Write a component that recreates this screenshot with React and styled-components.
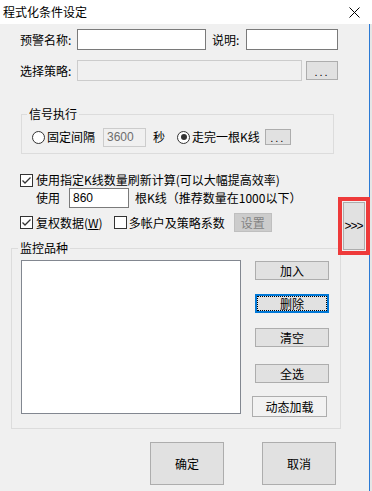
import React from "react"
import styled, { createGlobalStyle } from "styled-components"

const GlobalStyle = createGlobalStyle`
  html, body {
    margin: 0;
    padding: 0;
    background: #f0f0f0;
  }
  body {
    font-family: "Noto Sans CJK SC", "Microsoft YaHei", sans-serif;
    font-size: 12px;
    color: #000;
  }
`

const Window = styled.div`
  position: relative;
  width: 372px;
  height: 491px;
  display: flex;
  flex-direction: column;
  overflow: hidden;
  background: #f0f0f0;
`

const TitleBar = styled.div`
  flex: none;
  height: 24px;
  background: #fff;
  display: flex;
  align-items: center;
  justify-content: space-between;
  padding: 0 12px 0 3px;
  line-height: 16px;
`

const Main = styled.div`
  flex: 1;
  display: flex;
`

const Dialog = styled.div`
  width: 369px;
  display: flex;
  flex-direction: column;
  align-items: flex-start;
`

const Edge = styled.div`
  width: 2px;
  border-left: 1px solid #2a7ad5;
  background: #e6e6e6;
`

const Row = styled.div`
  display: flex;
  align-items: center;
  height: ${p => p.$h || 21}px;
  margin-top: ${p => p.$mt || 0}px;
  margin-bottom: ${p => p.$mb || 0}px;
  padding-left: ${p => p.$pl || 0}px;
  line-height: 16px;
  white-space: nowrap;
`

const Label = styled.span`
  width: ${p => (p.$w ? p.$w + "px" : "auto")};
  margin-left: ${p => p.$ml || 0}px;
  flex: none;
`

const TextBox = styled.div`
  box-sizing: border-box;
  width: ${p => p.$w}px;
  height: ${p => p.$h || 21}px;
  margin-left: ${p => p.$ml || 0}px;
  border: 1px solid ${p => (p.$disabled ? "#cccccc" : "#7a7a7a")};
  background: ${p => (p.$disabled ? "#f0f0f0" : "#fff")};
  color: ${p => (p.$disabled ? "#6d6d6d" : "#000")};
  padding: 0 3px;
  display: flex;
  align-items: center;
  font-family: "Liberation Sans", "Noto Sans CJK SC", sans-serif;
  font-size: 12px;
`

const Button = styled.button`
  box-sizing: border-box;
  flex: none;
  width: ${p => p.$w}px;
  height: ${p => p.$h || 19}px;
  margin: ${p => p.$mt || 0}px 0 0 ${p => p.$ml || 0}px;
  padding: 0;
  border: 1px solid #adadad;
  background: #e1e1e1;
  color: #000;
  font-family: "Noto Sans CJK SC", "Microsoft YaHei", sans-serif;
  font-size: 12px;
  line-height: 14px;
  display: flex;
  align-items: center;
  justify-content: center;

  &[disabled] {
    background: #cccccc;
    border-color: #bfbfbf;
    color: #838383;
  }
`

const FocusButton = styled(Button)`
  border: 2px solid #0078d7;
  outline: 1px dotted #000;
  outline-offset: -3px;
`

const PlainButton = styled(Button)`
  background: #f2f2f2;
`

const Dots = styled.span`
  letter-spacing: 2px;
  font-family: "Liberation Sans", sans-serif;
  font-size: 11px;
  margin-top: 2px;
`

const Group = styled.fieldset`
  box-sizing: border-box;
  width: ${p => p.$w}px;
  margin: ${p => p.$mt}px 0 0 ${p => p.$ml}px;
  padding: 0;
  border: 1px solid #dcdcdc;
  min-width: 0;
`

const Legend = styled.legend`
  margin-left: ${p => p.$ml || 5}px;
  padding: 0 2px;
  line-height: 16px;
  font-size: 12px;
`

const RadioDot = styled.span`
  box-sizing: border-box;
  width: 13px;
  height: 13px;
  margin-left: ${p => p.$ml || 0}px;
  border: 1px solid #333;
  border-radius: 50%;
  background: #fff;
  display: flex;
  align-items: center;
  justify-content: center;
  flex: none;

  &::after {
    content: "";
    width: 6px;
    height: 6px;
    border-radius: 50%;
    background: ${p => (p.$checked ? "#333" : "transparent")};
  }
`

const Box = styled.span`
  box-sizing: border-box;
  width: 13px;
  height: 13px;
  margin-left: ${p => p.$ml || 0}px;
  border: 1px solid #333;
  background: #fff;
  display: flex;
  flex: none;
`

const Mnemonic = styled.u`
  text-underline-offset: 1px;
`

const MonitorBody = styled.div`
  display: flex;
  align-items: flex-start;
  padding: 4px 0 11px 9px;
`

const ListBox = styled.div`
  box-sizing: border-box;
  width: 220px;
  height: 154px;
  border: 1px solid #828790;
  background: #fff;
`

const SideButtons = styled.div`
  display: flex;
  flex-direction: column;
  margin-left: 14px;
`

const Footer = styled.div`
  display: flex;
  gap: 38px;
  margin-top: 13px;
  padding-left: 150px;
`

const Highlight = styled.div`
  position: absolute;
  left: 338px;
  top: 197px;
  padding: 1px;
  border: 4px solid #ee3a3a;
`

const Chevrons = styled.span`
  font-family: "Liberation Sans", sans-serif;
  font-size: 12px;
  letter-spacing: -1px;
  margin-left: -1px;
`

function CheckBox({ checked, ml }) {
  return (
    <Box $ml={ml}>
      {checked && (
        <svg width="11" height="11" viewBox="0 0 11 11">
          <path d="M1.5 5.5 L4 8 L9.5 2.5" fill="none" stroke="#333" strokeWidth="1.3" />
        </svg>
      )}
    </Box>
  )
}

function CloseIcon() {
  return (
    <svg width="11" height="11" viewBox="0 0 11 11">
      <path d="M0.5 0.5 L10.5 10.5 M10.5 0.5 L0.5 10.5" stroke="#000" strokeWidth="1" />
    </svg>
  )
}

export default function App() {
  return (
    <Window>
      <GlobalStyle />
      <TitleBar>
        <span>程式化条件设定</span>
        <CloseIcon />
      </TitleBar>

      <Main>
        <Dialog>
          <Row $mt={5} $pl={20}>
            <Label $w={57}>预警名称:</Label>
            <TextBox $w={129} />
            <Label $w={34} $ml={6}>说明:</Label>
            <TextBox $w={92} />
          </Row>

          <Row $mt={10} $pl={20}>
            <Label $w={57}>选择策略:</Label>
            <TextBox $w={225} $disabled />
            <Button $w={32} $ml={4}><Dots>...</Dots></Button>
          </Row>

          <Group $w={313} $mt={25} $ml={21}>
            <Legend>信号执行</Legend>
            <Row $h={20} $mt={5} $mb={6} $pl={10}>
              <RadioDot />
              <Label $ml={2}>固定间隔</Label>
              <TextBox $w={43} $h={19} $ml={8} $disabled>3600</TextBox>
              <Label $ml={7}>秒</Label>
              <RadioDot $ml={12} $checked />
              <Label $ml={2}>走完一根K线</Label>
              <Button $w={26} $h={16} $ml={5}><Dots>...</Dots></Button>
            </Row>
          </Group>

          <Row $h={16} $mt={18} $pl={20}>
            <CheckBox checked />
            <Label $ml={3}>使用指定K线数量刷新计算(可以大幅提高效率)</Label>
          </Row>

          <Row $h={20} $pl={36}>
            <Label>使用</Label>
            <TextBox $w={60} $h={20} $ml={9}>860</TextBox>
            <Label $ml={6}>根K线（推荐数量在1000以下）</Label>
          </Row>

          <Row $h={19} $mt={5} $pl={20}>
            <CheckBox checked />
            <Label $ml={3}>复权数据(<Mnemonic>W</Mnemonic>)</Label>
            <CheckBox ml={11} />
            <Label $ml={2}>多帐户及策略系数</Label>
            <Button $w={38} $ml={9} disabled>设置</Button>
          </Row>

          <Group $w={330} $mt={8} $ml={11}>
            <Legend $ml={6}>监控品种</Legend>
            <MonitorBody>
              <ListBox />
              <SideButtons>
                <Button $w={74} $mt={1}>加入</Button>
                <FocusButton $w={74} $mt={14}>删除</FocusButton>
                <Button $w={74} $mt={15}>清空</Button>
                <Button $w={74} $mt={17}>全选</Button>
                <PlainButton $w={75} $h={21} $mt={13} $ml={-3}>动态加载</PlainButton>
              </SideButtons>
            </MonitorBody>
          </Group>

          <Footer>
            <Button $w={74} $h={43}>确定</Button>
            <Button $w={74} $h={43}>取消</Button>
          </Footer>
        </Dialog>
        <Edge />
      </Main>

      <Highlight>
        <Button $w={22} $h={48}><Chevrons>&gt;&gt;&gt;</Chevrons></Button>
      </Highlight>
    </Window>
  )
}
